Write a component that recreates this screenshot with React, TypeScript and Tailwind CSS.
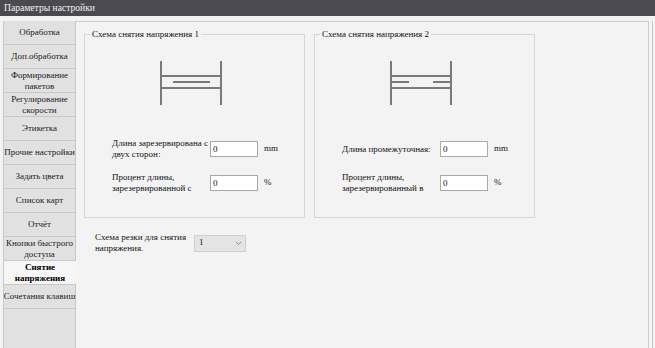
import React from "react";

const tabs: { label: string[]; active?: boolean }[] = [
  { label: ["Обработка"] },
  { label: ["Доп.обработка"] },
  { label: ["Формирование", "пакетов"] },
  { label: ["Регулирование", "скорости"] },
  { label: ["Этикетка"] },
  { label: ["Прочие настройки"] },
  { label: ["Задать цвета"] },
  { label: ["Список карт"] },
  { label: ["Отчёт"] },
  { label: ["Кнопки быстрого", "доступа"] },
  { label: ["Снятие", "напряжения"], active: true },
  { label: ["Сочетания клавиш"] },
];

function Diagram({ split }: { split?: boolean }) {
  return (
    <svg width="64" height="46" viewBox="0 0 64 46" className="block">
      <g stroke="#7a7a7a" strokeWidth="2" fill="none">
        <line x1="2" y1="1" x2="2" y2="45" />
        <line x1="62" y1="1" x2="62" y2="45" />
        <line x1="2" y1="16" x2="62" y2="16" />
        <line x1="2" y1="28" x2="62" y2="28" />
        {split ? (
          <>
            <line x1="2" y1="22" x2="20" y2="22" />
            <line x1="44" y1="22" x2="62" y2="22" />
          </>
        ) : (
          <line x1="14" y1="22" x2="51" y2="22" />
        )}
      </g>
    </svg>
  );
}

function Field({ label, unit }: { label: string[]; unit: string }) {
  return (
    <div className="flex items-center h-[24px]">
      <div className="w-[98px] leading-[11px] whitespace-nowrap">
        {label.map((l, i) => (
          <div key={i}>{l}</div>
        ))}
      </div>
      <div className="w-[48px] h-[16px] border border-[#a9a9a9] bg-white pl-[2px] leading-[14px]">0</div>
      <div className="ml-[6px]">{unit}</div>
    </div>
  );
}

function Group({ title, split, rows }: { title: string; split?: boolean; rows: { label: string[]; unit: string }[] }) {
  return (
    <fieldset className="w-[221px] h-[190px] border border-[#d6d6d6] pl-[27px] pr-0 pt-0 m-0">
      <legend className="ml-[-22px] px-[2px] leading-[12px] text-[#111]">{title}</legend>
      <div className="pl-[47px] pt-[20px]">
        <Diagram split={split} />
      </div>
      <div className="mt-[31px] flex flex-col gap-[10px]">
        {rows.map((r, i) => (
          <Field key={i} label={r.label} unit={r.unit} />
        ))}
      </div>
    </fieldset>
  );
}

export default function App() {
  return (
    <div className="w-[655px] h-[348px] overflow-hidden bg-[#f3f3f3] text-[9px] text-[#111] font-['Liberation_Serif','Times_New_Roman',serif]">
      <div className="h-[16px] bg-[#4b4a50] text-[#f2f2f2] text-[9.6px] leading-[15px] pl-[4px]">
        Параметры настройки
      </div>
      <div className="flex pt-[5px] pl-[3px] h-[332px]">
        <div className="w-[73px] flex flex-col border-l border-[#c8c8c8]">
          {tabs.map((t, i) => (
            <div
              key={i}
              className={
                "h-[24px] flex flex-col items-center justify-center leading-[11px] text-center border-b border-[#c8c8c8] whitespace-nowrap " +
                (t.active ? "bg-[#f6f6f6] font-bold text-black" : "bg-[#e1e1e1] border-r text-[#222]")
              }
            >
              {t.label.map((l, j) => (
                <div key={j}>{l}</div>
              ))}
            </div>
          ))}
          <div className="flex-1 bg-[#e1e1e1] border-r border-[#c8c8c8]" />
        </div>
        <div className="w-[573px] border-t border-r border-[#cdcdcd] pl-[8px] pt-[6px]">
          <div className="flex gap-[9px]">
            <Group
              title="Схема снятия напряжения 1"
              rows={[
                { label: ["Длина зарезервирована с", "двух сторон:"], unit: "mm" },
                { label: ["Процент длины,", "зарезервированной с"], unit: "%" },
              ]}
            />
            <Group
              title="Схема снятия напряжения 2"
              split
              rows={[
                { label: ["Длина промежуточная:"], unit: "mm" },
                { label: ["Процент длины,", "зарезервированный в"], unit: "%" },
              ]}
            />
          </div>
          <div className="flex items-center mt-[14px] pl-[11px]">
            <div className="w-[99px] leading-[11px] whitespace-nowrap">
              <div>Схема резки для снятия</div>
              <div>напряжения.</div>
            </div>
            <div className="w-[52px] h-[17px] bg-[#e4e4e4] border border-[#cfcfcf] flex items-center justify-between pl-[4px] pr-[3px]">
              <span>1</span>
              <svg width="7" height="5" viewBox="0 0 7 5">
                <path d="M1 1 L3.5 3.5 L6 1" stroke="#888" strokeWidth="1" fill="none" />
              </svg>
            </div>
          </div>
        </div>
        <div className="w-[3px]" />
        <div className="w-[1px] bg-[#c8c8c8]" />
      </div>
    </div>
  );
}
